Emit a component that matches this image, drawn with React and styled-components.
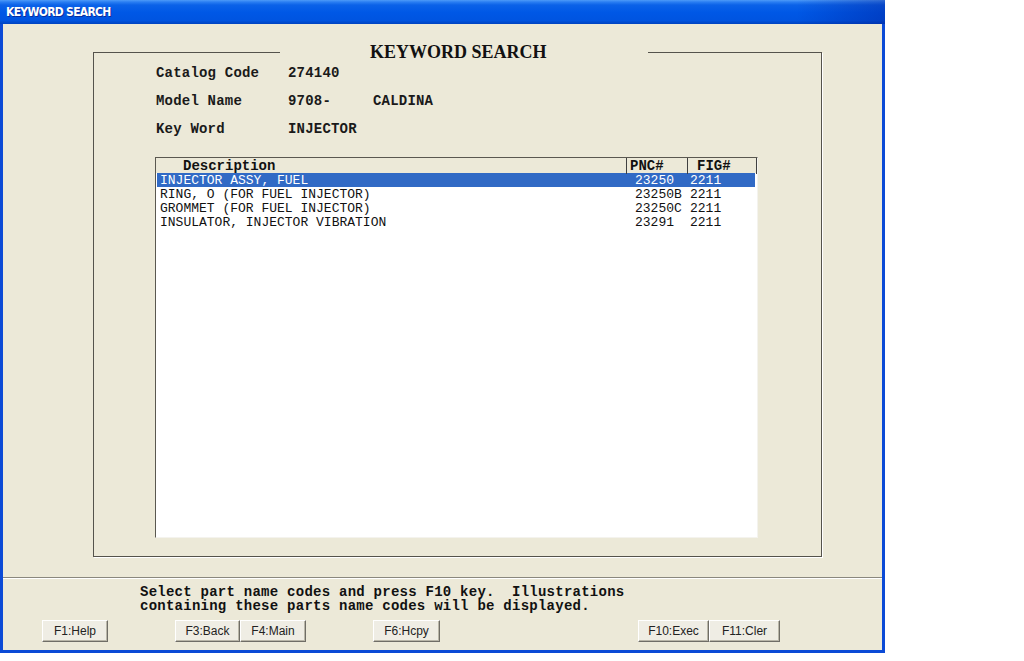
import React from "react"
import styled, { createGlobalStyle } from "styled-components"

const GlobalStyle = createGlobalStyle`
  html, body {
    margin: 0;
    padding: 0;
    background: #fff;
    overflow: hidden;
  }
  body {
    width: 1024px;
    height: 661px;
  }
`

const Window = styled.div`
  width: 885px;
  height: 653px;
  display: flex;
  flex-direction: column;
`

const TitleBar = styled.div`
  flex: none;
  height: 24px;
  display: flex;
  align-items: center;
  padding-left: 6px;
  color: #fff;
  font-family: "DejaVu Sans Condensed", "Liberation Sans", sans-serif;
  font-weight: bold;
  font-size: 12px;
  letter-spacing: -0.7px;
  text-shadow: 1px 1px 0 #0a2d9c;
  background:
    linear-gradient(to right, rgba(0, 0, 0, 0) 90%, rgba(0, 20, 140, 0.35) 100%),
    linear-gradient(
      to bottom,
      #4d9bf8 0,
      #2a7ef2 2px,
      #0b62e8 5px,
      #0058e6 50%,
      #0054e0 85%,
      #0043c0 100%
    );
`

const Client = styled.div`
  flex: 1;
  display: flex;
  flex-direction: column;
  background: #ece9d8;
  border: 3px solid #0b4ad6;
  border-top: none;
`

const MainArea = styled.div`
  flex: 1;
  padding: 18px 0 0 90px;
`

const GroupBox = styled.fieldset`
  box-sizing: border-box;
  width: 729px;
  height: 515px;
  margin: 0;
  padding: 1px 0 0 61px;
  min-inline-size: 0;
  border: 1px solid #55534c;
  box-shadow: 1px 1px 0 #fff;
`

const GroupTitle = styled.legend`
  box-sizing: border-box;
  width: 368px;
  margin-left: 125px;
  padding: 0 0 0 90px;
  text-align: left;
  font-family: "Liberation Serif", "Times New Roman", serif;
  font-weight: bold;
  font-size: 18px;
  line-height: 20px;
  color: #111;
`

const InfoBlock = styled.div`
  display: flex;
  flex-direction: column;
  gap: 8px;
`

const InfoRow = styled.div`
  display: grid;
  grid-template-columns: 132px 85px auto;
  height: 20px;
  line-height: 20px;
  padding-left: 1px;
  font-family: "Liberation Mono", "Courier New", monospace;
  font-weight: bold;
  font-size: 14px;
  letter-spacing: 0.2px;
  color: #1a1a1a;
`

const ListBox = styled.div`
  box-sizing: border-box;
  width: 603px;
  height: 381px;
  margin-top: 18px;
  background: #fff;
  border: 1px solid;
  border-color: #5a5850 #f4f3ee #f4f3ee #5a5850;
`

const HeaderRow = styled.div`
  display: grid;
  grid-template-columns: 471px 61px 69px;
  height: 15px;
  background: #ece9d8;
`

const HeaderCell = styled.div`
  box-sizing: border-box;
  padding-left: ${p => p.$indent}px;
  border-right: 1px solid #404040;
  font-family: "Liberation Mono", "Courier New", monospace;
  font-weight: bold;
  font-size: 14px;
  line-height: 16px;
  color: #111;
  white-space: pre;
`

const Row = styled.div`
  display: grid;
  grid-template-columns: 470px 61px 68px;
  margin: 0 2px 0 1px;
  height: 14px;
  font-family: "Liberation Mono", "Courier New", monospace;
  font-size: 13px;
  line-height: 16px;
  background: ${p => (p.$selected ? "#316ac5" : "transparent")};
  color: ${p => (p.$selected ? "#fff" : "#111")};
  white-space: pre;
`

const Cell = styled.div`
  padding-left: ${p => p.$indent}px;
  height: 14px;
  overflow: visible;
`

const StatusPanel = styled.div`
  flex: none;
  box-sizing: border-box;
  height: 73px;
  padding-top: 7px;
  border-top: 1px solid #8a887e;
  box-shadow: inset 0 1px 0 #fff;
`

const StatusText = styled.div`
  padding-left: 137px;
  font-family: "Liberation Mono", "Courier New", monospace;
  font-weight: bold;
  font-size: 14px;
  line-height: 14px;
  letter-spacing: 0.25px;
  color: #111;
  white-space: pre;
`

const ButtonBar = styled.div`
  display: flex;
  margin-top: 7px;
  padding-left: 39px;
`

const FKey = styled.button`
  box-sizing: border-box;
  height: 22px;
  width: ${p => p.$w}px;
  margin: 0 0 0 ${p => p.$gap || 0}px;
  padding: 0;
  background: #efede4;
  border: 1px solid;
  border-color: #fff #6f6d66 #6f6d66 #fff;
  box-shadow: inset -1px -1px 0 #b9b6a8;
  font-family: "Liberation Sans", Arial, sans-serif;
  font-size: 12px;
  color: #222;
`

const items = [
  { desc: "INJECTOR ASSY, FUEL", pnc: "23250", fig: "2211" },
  { desc: "RING, O (FOR FUEL INJECTOR)", pnc: "23250B", fig: "2211" },
  { desc: "GROMMET (FOR FUEL INJECTOR)", pnc: "23250C", fig: "2211" },
  { desc: "INSULATOR, INJECTOR VIBRATION", pnc: "23291", fig: "2211" },
]

const keys = [
  { label: "F1:Help", w: 66 },
  { label: "F3:Back", w: 65, gap: 67 },
  { label: "F4:Main", w: 66 },
  { label: "F6:Hcpy", w: 67, gap: 67 },
  { label: "F10:Exec", w: 71, gap: 198 },
  { label: "F11:Cler", w: 71 },
]

export default function App() {
  return (
    <>
      <GlobalStyle />
      <Window>
        <TitleBar>KEYWORD SEARCH</TitleBar>
        <Client>
          <MainArea>
            <GroupBox>
              <GroupTitle>KEYWORD SEARCH</GroupTitle>
              <InfoBlock>
                <InfoRow>
                  <span>Catalog Code</span>
                  <span>274140</span>
                </InfoRow>
                <InfoRow>
                  <span>Model Name</span>
                  <span>9708-</span>
                  <span>CALDINA</span>
                </InfoRow>
                <InfoRow>
                  <span>Key Word</span>
                  <span>INJECTOR</span>
                </InfoRow>
              </InfoBlock>
              <ListBox>
                <HeaderRow>
                  <HeaderCell $indent={27}>Description</HeaderCell>
                  <HeaderCell $indent={3}>PNC#</HeaderCell>
                  <HeaderCell $indent={9}>FIG#</HeaderCell>
                </HeaderRow>
                {items.map((it, i) => (
                  <Row key={it.pnc} $selected={i === 0}>
                    <Cell $indent={3}>{it.desc}</Cell>
                    <Cell $indent={8}>{it.pnc}</Cell>
                    <Cell $indent={2}>{it.fig}</Cell>
                  </Row>
                ))}
              </ListBox>
            </GroupBox>
          </MainArea>
          <StatusPanel>
            <StatusText>
              {"Select part name codes and press F10 key.  Illustrations\ncontaining these parts name codes will be displayed."}
            </StatusText>
            <ButtonBar>
              {keys.map(k => (
                <FKey key={k.label} $w={k.w} $gap={k.gap}>
                  {k.label}
                </FKey>
              ))}
            </ButtonBar>
          </StatusPanel>
        </Client>
      </Window>
    </>
  )
}
